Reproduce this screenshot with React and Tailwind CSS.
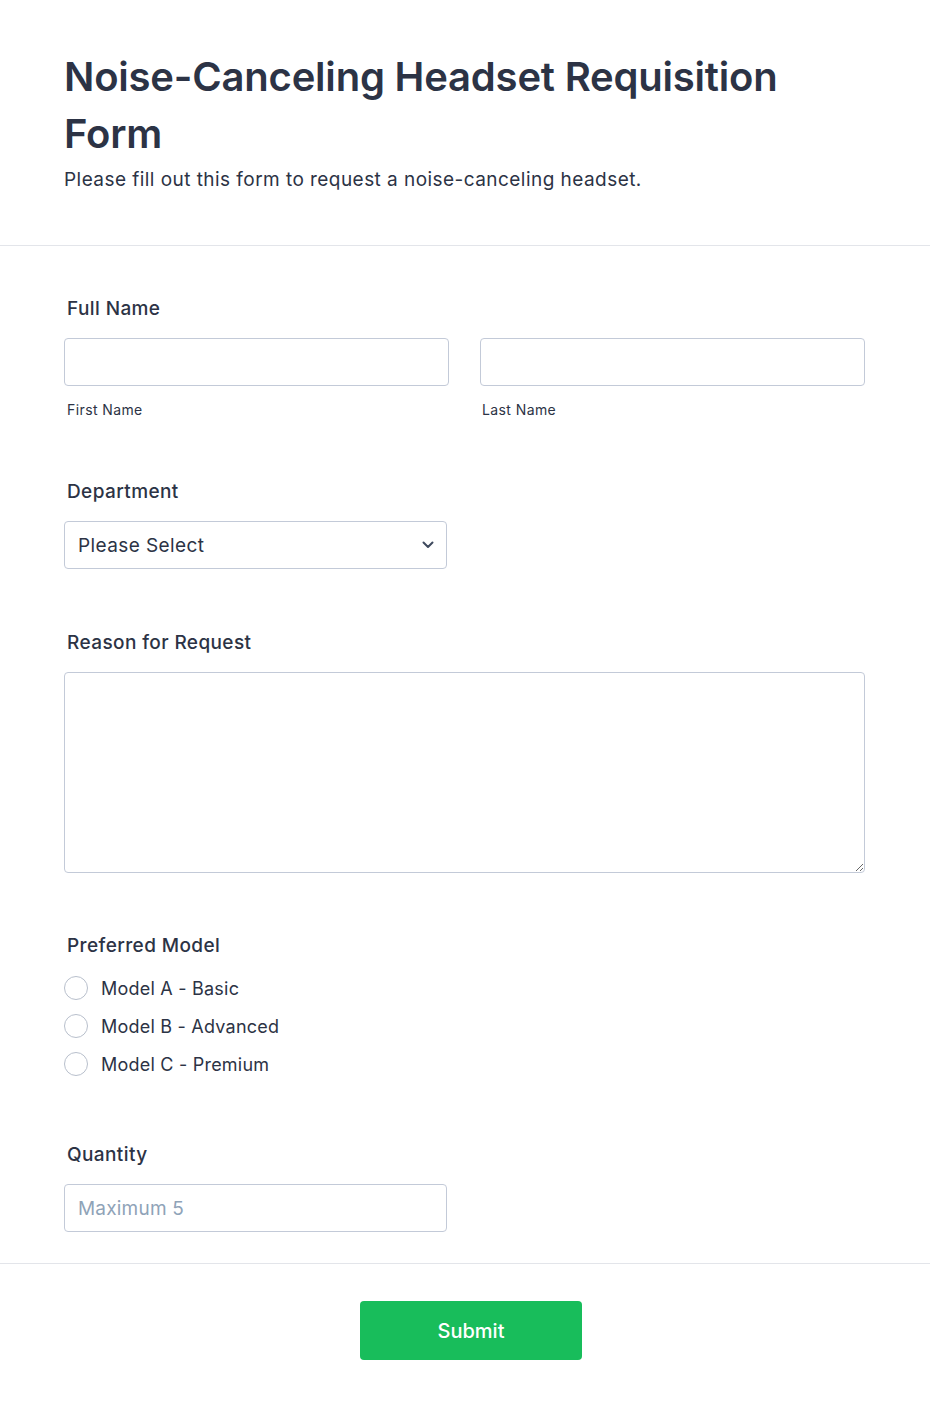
import React from 'react';

const font = { fontFamily: 'Inter, "Noto Sans", sans-serif' };

function Label({ children }) {
    return (
        <div className="pl-[3px] pt-[3px] text-[19px] leading-[28px] tracking-[0.4px] font-medium text-[#2c3345]">
            {children}
        </div>
    );
}

export default function App() {
    return (
        <div className="w-[930px] min-h-[1410px] bg-white" style={font}>
            {/* Header */}
            <div className="px-16 pt-[48px] pb-[51px] border-b border-[#e3e5ea]">
                <h1 className="w-[801px] text-[40px] leading-[57px] tracking-[-0.2px] font-semibold text-[#2c3345]">
                    Noise-Canceling Headset Requisition Form
                </h1>
                <p className="mt-1 text-[19px] leading-[28px] tracking-[0.45px] text-[#2c3345]">
                    Please fill out this form to request a noise-canceling headset.
                </p>
            </div>

            {/* Fields */}
            <div className="px-16 pt-[46px] pb-[31px] w-[930px]">
                <Label>Full Name</Label>
                <div className="mt-[15px] grid grid-cols-2 gap-[31px] w-[801px]">
                    <div>
                        <input className="w-full h-12 border border-[#c3cad8] rounded-[4px] px-3 outline-none" />
                        <div className="mt-[14px] pl-[3px] text-[14px] leading-[20px] tracking-[0.4px] text-[#2c3345]">First Name</div>
                    </div>
                    <div>
                        <input className="w-full h-12 border border-[#c3cad8] rounded-[4px] px-3 outline-none" />
                        <div className="mt-[14px] pl-[2px] text-[14px] leading-[20px] tracking-[0.4px] text-[#2c3345]">Last Name</div>
                    </div>
                </div>

                <div className="mt-[55px]">
                    <Label>Department</Label>
                    <div className="mt-[15px] w-[383px] h-12 border border-[#c3cad8] rounded-[4px] pl-[13px] pr-[12px] flex items-center justify-between">
                        <span className="pt-[2px] text-[19px] tracking-[0.4px] text-[#2c3345]">Please Select</span>
                        <svg width="12" height="8" viewBox="0 0 12 8" fill="none">
                            <path d="M1.5 1.5L6 6L10.5 1.5" stroke="#3f4a5e" strokeWidth="2" strokeLinecap="round" strokeLinejoin="round" />
                        </svg>
                    </div>
                </div>

                <div className="mt-[57px]">
                    <Label>Reason for Request</Label>
                    <textarea className="mt-[15px] block w-[801px] h-[201px] border border-[#c3cad8] rounded-[4px] p-3 outline-none" />
                </div>

                <div className="mt-[56px]">
                    <Label>Preferred Model</Label>
                    <div className="mt-[9px] flex flex-col">
                        {['Model A - Basic', 'Model B - Advanced', 'Model C - Premium'].map((m) => (
                            <div key={m} className="h-[38px] flex items-center">
                                <span className="w-6 h-6 rounded-full border border-[#b8bfcc] bg-white" />
                                <span className="ml-[13px] text-[18px] tracking-[0.22px] text-[#2c3345]">{m}</span>
                            </div>
                        ))}
                    </div>
                </div>

                <div className="mt-[55px]">
                    <Label>Quantity</Label>
                    <input
                        placeholder="Maximum 5"
                        className="mt-[15px] block w-[383px] h-12 border border-[#c3cad8] rounded-[4px] px-[13px] text-[19px] tracking-[0.2px] text-[#2c3345] placeholder:text-[#8fa3b8] outline-none"
                    />
                </div>
            </div>

            {/* Footer */}
            <div className="border-t border-[#e3e5ea] pt-[37px] pb-[50px] flex justify-center">
                <button className="ml-[12px] w-[222px] h-[59px] rounded-[4px] bg-[#18bd5b] text-white text-[20px] font-medium">
                    Submit
                </button>
            </div>
        </div>
    );
}
